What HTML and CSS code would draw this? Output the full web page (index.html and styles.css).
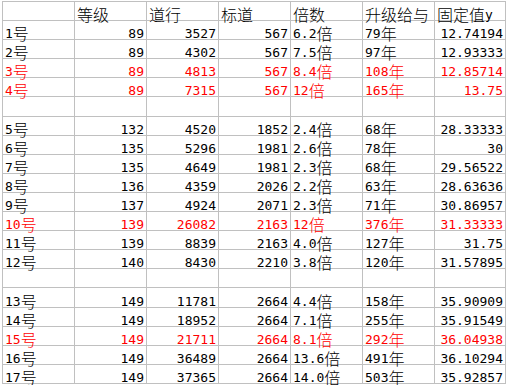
FILE: index.html
```html
<!DOCTYPE html>
<html lang="zh">
<head>
<meta charset="utf-8">
<title>Sheet</title>
<link rel="stylesheet" href="styles.css">
</head>
<body>
<div class="sheet">
  <div class="row">
    <div class="c"></div>
    <div class="c"><span class="k">等级</span></div>
    <div class="c"><span class="k">道行</span></div>
    <div class="c"><span class="k">标道</span></div>
    <div class="c"><span class="k">倍数</span></div>
    <div class="c"><span class="k">升级给与</span></div>
    <div class="c"><span class="k">固定值</span>y</div>
  </div>
  <div class="row">
    <div class="c">1<span class="k">号</span></div><div class="c n">89</div><div class="c n">3527</div><div class="c n">567</div><div class="c">6.2<span class="k">倍</span></div><div class="c">79<span class="k">年</span></div><div class="c n">12.74194</div>
  </div>
  <div class="row">
    <div class="c">2<span class="k">号</span></div><div class="c n">89</div><div class="c n">4302</div><div class="c n">567</div><div class="c">7.5<span class="k">倍</span></div><div class="c">97<span class="k">年</span></div><div class="c n">12.93333</div>
  </div>
  <div class="row red">
    <div class="c">3<span class="k">号</span></div><div class="c n">89</div><div class="c n">4813</div><div class="c n">567</div><div class="c">8.4<span class="k">倍</span></div><div class="c">108<span class="k">年</span></div><div class="c n">12.85714</div>
  </div>
  <div class="row red">
    <div class="c">4<span class="k">号</span></div><div class="c n">89</div><div class="c n">7315</div><div class="c n">567</div><div class="c">12<span class="k">倍</span></div><div class="c">165<span class="k">年</span></div><div class="c n">13.75</div>
  </div>
  <div class="row">
    <div class="c"></div><div class="c"></div><div class="c"></div><div class="c"></div><div class="c"></div><div class="c"></div><div class="c"></div>
  </div>
  <div class="row">
    <div class="c">5<span class="k">号</span></div><div class="c n">132</div><div class="c n">4520</div><div class="c n">1852</div><div class="c">2.4<span class="k">倍</span></div><div class="c">68<span class="k">年</span></div><div class="c n">28.33333</div>
  </div>
  <div class="row">
    <div class="c">6<span class="k">号</span></div><div class="c n">135</div><div class="c n">5296</div><div class="c n">1981</div><div class="c">2.6<span class="k">倍</span></div><div class="c">78<span class="k">年</span></div><div class="c n">30</div>
  </div>
  <div class="row">
    <div class="c">7<span class="k">号</span></div><div class="c n">135</div><div class="c n">4649</div><div class="c n">1981</div><div class="c">2.3<span class="k">倍</span></div><div class="c">68<span class="k">年</span></div><div class="c n">29.56522</div>
  </div>
  <div class="row">
    <div class="c">8<span class="k">号</span></div><div class="c n">136</div><div class="c n">4359</div><div class="c n">2026</div><div class="c">2.2<span class="k">倍</span></div><div class="c">63<span class="k">年</span></div><div class="c n">28.63636</div>
  </div>
  <div class="row">
    <div class="c">9<span class="k">号</span></div><div class="c n">137</div><div class="c n">4924</div><div class="c n">2071</div><div class="c">2.3<span class="k">倍</span></div><div class="c">71<span class="k">年</span></div><div class="c n">30.86957</div>
  </div>
  <div class="row red">
    <div class="c">10<span class="k">号</span></div><div class="c n">139</div><div class="c n">26082</div><div class="c n">2163</div><div class="c">12<span class="k">倍</span></div><div class="c">376<span class="k">年</span></div><div class="c n">31.33333</div>
  </div>
  <div class="row">
    <div class="c">11<span class="k">号</span></div><div class="c n">139</div><div class="c n">8839</div><div class="c n">2163</div><div class="c">4.0<span class="k">倍</span></div><div class="c">127<span class="k">年</span></div><div class="c n">31.75</div>
  </div>
  <div class="row">
    <div class="c">12<span class="k">号</span></div><div class="c n">140</div><div class="c n">8430</div><div class="c n">2210</div><div class="c">3.8<span class="k">倍</span></div><div class="c">120<span class="k">年</span></div><div class="c n">31.57895</div>
  </div>
  <div class="row">
    <div class="c"></div><div class="c"></div><div class="c"></div><div class="c"></div><div class="c"></div><div class="c"></div><div class="c"></div>
  </div>
  <div class="row">
    <div class="c">13<span class="k">号</span></div><div class="c n">149</div><div class="c n">11781</div><div class="c n">2664</div><div class="c">4.4<span class="k">倍</span></div><div class="c">158<span class="k">年</span></div><div class="c n">35.90909</div>
  </div>
  <div class="row">
    <div class="c">14<span class="k">号</span></div><div class="c n">149</div><div class="c n">18952</div><div class="c n">2664</div><div class="c">7.1<span class="k">倍</span></div><div class="c">255<span class="k">年</span></div><div class="c n">35.91549</div>
  </div>
  <div class="row red">
    <div class="c">15<span class="k">号</span></div><div class="c n">149</div><div class="c n">21711</div><div class="c n">2664</div><div class="c">8.1<span class="k">倍</span></div><div class="c">292<span class="k">年</span></div><div class="c n">36.04938</div>
  </div>
  <div class="row">
    <div class="c">16<span class="k">号</span></div><div class="c n">149</div><div class="c n">36489</div><div class="c n">2664</div><div class="c">13.6<span class="k">倍</span></div><div class="c">491<span class="k">年</span></div><div class="c n">36.10294</div>
  </div>
  <div class="row">
    <div class="c">17<span class="k">号</span></div><div class="c n">149</div><div class="c n">37365</div><div class="c n">2664</div><div class="c">14.0<span class="k">倍</span></div><div class="c">503<span class="k">年</span></div><div class="c n">35.92857</div>
  </div>
</div>
</body>
</html>
```
FILE: styles.css
```css
html, body {
  margin: 0;
  padding: 0;
  background: #ffffff;
}

body {
  width: 510px;
  height: 385px;
  overflow: hidden;
  color: #000000;
  font-family: "DejaVu Sans Mono", "Noto Sans CJK SC", monospace;
  font-size: 13px;
}

.sheet {
  margin: 1px 0 0 2px;
  display: grid;
  grid-template-columns: repeat(6, 72px) 71px;
  grid-auto-rows: 19.1px;
  width: max-content;
  border-top: 1px solid #c0c0c0;
  border-left: 1px solid #c0c0c0;
}

.row {
  display: contents;
}

.red {
  color: #ff0000;
}

.c {
  box-sizing: border-box;
  display: flex;
  align-items: flex-end;
  padding: 0 2px 0 2px;
  border-right: 1px solid #c0c0c0;
  border-bottom: 1px solid #c0c0c0;
  line-height: 11px;
  white-space: nowrap;
  min-width: 0;
}

.n {
  justify-content: flex-end;
}

.k {
  font-family: "Noto Sans CJK SC", sans-serif;
  font-size: 16px;
  font-weight: 300;
  vertical-align: 1px;
}
```
